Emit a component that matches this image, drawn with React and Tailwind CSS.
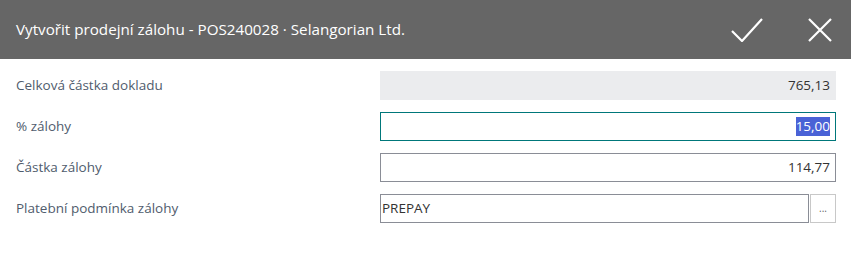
import { useState } from "react";

const font = { fontFamily: '"Open Sans", "Liberation Sans", sans-serif' };

const Field = ({ label, children }) => (
  <div className="flex items-center h-[29px]">
    <div className="w-[364px] text-[13.5px] text-[#505c6d]">{label}</div>
    <div className="flex-1 flex h-full">{children}</div>
  </div>
);

const App = () => {
  const [code, setCode] = useState("PREPAY");

  return (
    <div className="w-[851px] h-[280px] bg-white" style={font}>
      <header className="h-[59px] bg-[#666666] flex items-center justify-between pl-4 pr-[19px]">
        <h1 className="text-[15.2px] text-white">
          Vytvořit prodejní zálohu - POS240028 · Selangorian Ltd.
        </h1>
        <div className="flex items-center gap-[45px]">
          <svg width="32" height="24" viewBox="0 0 32 24" fill="none" stroke="white" strokeWidth="2.2">
            <path d="M1 13 L11 23 L31 1" />
          </svg>
          <svg width="24" height="24" viewBox="0 0 24 24" fill="none" stroke="white" strokeWidth="2.2">
            <path d="M1 1 L23 23 M23 1 L1 23" />
          </svg>
        </div>
      </header>

      <div className="pl-4 pr-[15px] pt-3 flex flex-col gap-3">
        <Field label="Celková částka dokladu">
          <div className="flex-1 bg-[#ebecee] flex items-center justify-end pr-[6px] text-[13.5px] text-[#333]">
            765,13
          </div>
        </Field>
        <Field label="% zálohy">
          <div className="flex-1 border border-[#00777a] flex items-center justify-end pr-[5px] text-[13.5px]">
            <span className="bg-[#4a62d6] text-white leading-[19px]">15,00</span>
          </div>
        </Field>
        <Field label="Částka zálohy">
          <div className="flex-1 border border-[#8a8d96] flex items-center justify-end pr-[5px] text-[13.5px] text-[#333]">
            114,77
          </div>
        </Field>
        <Field label="Platební podmínka zálohy">
          <input
            value={code}
            onChange={(e) => setCode(e.target.value)}
            className="flex-1 min-w-0 border border-[#8a8d96] pl-[1px] pr-1 text-[13.5px] text-[#333] outline-none"
            style={font}
          />
          <button className="w-[26px] ml-[1px] border border-[#c8c8c8] text-[10px] text-[#666] flex items-end justify-center pb-[6px]">
            ...
          </button>
        </Field>
      </div>
    </div>
  );
};

export default App;
